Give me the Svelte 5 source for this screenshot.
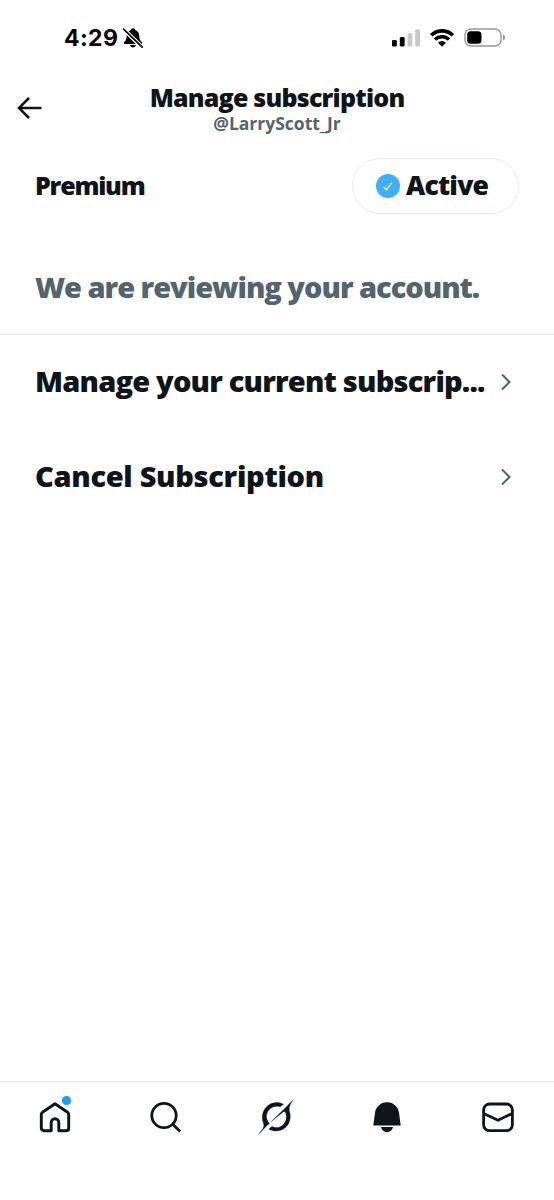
<script lang="ts">
	const username = 'LarryScott_Jr';

	const rows = [
		{ label: 'Manage your current subscrip...', kind: 'manage' },
		{ label: 'Cancel Subscription', kind: 'cancel' }
	];
</script>

<div class="screen">
	<div class="status-bar">
		<div class="clock">
			<span class="time">4:29</span>
			<svg width="22" height="22" viewBox="0 0 22 22" aria-hidden="true">
				<path
					d="M11 1.2c1.3 0 2 .8 2.2 1.8 2.8.9 4 3.2 4.1 5.8.1 3.5.7 4.7 2.5 6.3.8.8.4 1.8-.7 1.8H2.9c-1.1 0-1.5-1-.7-1.8C4 13.5 4.6 12.3 4.7 8.8 4.8 6.2 6 3.9 8.8 3 9 2 9.7 1.2 11 1.2zM8 18h6c-.3 1.6-1.4 2.5-3 2.5S8.3 19.6 8 18z"
					fill="#000"
				/>
				<path d="M1.6 2.2l18.6 18" stroke="#fff" stroke-width="4" />
				<path d="M1.6 2.2l18.6 18" stroke="#000" stroke-width="1.7" stroke-linecap="round" />
			</svg>
		</div>
		<div class="indicators">
			<svg width="28" height="18" viewBox="0 0 28 18" aria-hidden="true">
				<rect x="0" y="11" width="4.8" height="6.5" rx="1.3" />
				<rect x="7.8" y="8" width="4.8" height="9.5" rx="1.3" />
				<rect x="15.6" y="4.3" width="4.8" height="13.2" rx="1.3" fill="#c8c8c8" />
				<rect x="23.2" y="0.5" width="4.8" height="17" rx="1.3" fill="#c8c8c8" />
			</svg>
			<svg width="26" height="18" viewBox="0 0 26 18" aria-hidden="true">
				<path d="M2.2 6.3a15.3 15.3 0 0 1 21.6 0" fill="none" stroke="#000" stroke-width="3.7" />
				<path d="M6 10.6a9.9 9.9 0 0 1 14 0" fill="none" stroke="#000" stroke-width="3.5" />
				<path d="M9 13.8a5.6 5.6 0 0 1 8 0L13 17.8z" />
			</svg>
			<svg width="42" height="20" viewBox="0 0 42 20" aria-hidden="true">
				<rect x="1" y="1" width="36" height="17" rx="5.8" fill="none" stroke="#989898" stroke-width="1.4" />
				<rect x="3.2" y="3.2" width="14.3" height="12.6" rx="3.6" />
				<path d="M39 6.5c1.4.5 2.1 1.6 2.1 3s-.7 2.5-2.1 3z" fill="#989898" />
			</svg>
		</div>
	</div>

	<header class="header">
		<button type="button" class="back" aria-label="Back">
			<svg width="26" height="24" viewBox="0 0 26 24">
				<path d="M12 2L2 12l10 10M2 12H24.5" fill="none" stroke="#0f1419" stroke-width="2.5" />
			</svg>
		</button>
		<div class="heading">
			<h1>Manage subscription</h1>
			<span class="handle">@{username}</span>
		</div>
	</header>

	<main>
		<section class="plan">
			<h2>Premium</h2>
			<div class="status-pill">
				<svg width="24" height="24" viewBox="0 0 24 24" aria-hidden="true">
					<circle cx="12" cy="12" r="12" fill="#42aef5" />
					<path d="M7.5 12.8l2.8 3 5.5-7" fill="none" stroke="#fff" stroke-width="1.3" />
				</svg>
				<span>Active</span>
			</div>
		</section>

		<p class="notice">We are reviewing your account.</p>

		{#each rows as row (row.kind)}
			<button type="button" class="row">
				<span class="row-label {row.kind}">{row.label}</span>
				<svg width="12" height="18" viewBox="0 0 12 18" aria-hidden="true">
					<path d="M2 1.5L9.5 9 2 16.5" fill="none" stroke="#536471" stroke-width="2" />
				</svg>
			</button>
		{/each}
	</main>

	<nav class="tabs">
		<button type="button" class="tab" aria-label="Home">
			<svg width="36" height="36" viewBox="0 0 36 36">
				<path
					d="M5.5 13.2L18 4.8l12.5 8.4q1.2.8 1.2 2.3v13.4q0 2.9-2.9 2.9h-7V23.5a3.8 3.8 0 0 0-7.6 0v8.3h-7q-2.9 0-2.9-2.9V15.5q0-1.5 1.2-2.3z"
					fill="none"
					stroke="#0f1419"
					stroke-width="2.9"
					stroke-linejoin="round"
				/>
			</svg>
			<span class="dot"></span>
		</button>
		<button type="button" class="tab" aria-label="Search">
			<svg width="36" height="36" viewBox="0 0 36 36">
				<circle cx="16" cy="16.5" r="12.2" fill="none" stroke="#0f1419" stroke-width="2.8" />
				<path d="M24.8 25.3l7.3 7.2" stroke="#0f1419" stroke-width="2.8" />
			</svg>
		</button>
		<button type="button" class="tab" aria-label="Grok">
			<svg width="38" height="38" viewBox="0 0 38 38" fill="#0f1419" stroke="#0f1419" stroke-width="0.3">
				<path d="M14.2 23.6L28 10.2C32 6 34 4 36.3 1.7C33.6 5.6 31.8 8.2 32.3 12.4C34.7 20.3 32.5 26 28.2 29.7C23.4 33.8 16.6 34 11.8 30.9L14.9 28.4C18.6 30.2 22.6 29.7 25.5 27.2C29.2 23.9 30.2 19.5 28.6 14.7C28.2 13.3 27.2 13 26.2 13.9z" />
				<path d="M12.4 25.2C8.4 29 5.3 32.6 1.7 36.3C4.4 32.5 6.4 30.8 6.8 28C7.2 26.2 6 24.7 5.6 22.6C4.4 16.7 6.5 11.2 10.7 7.7C15.2 4 21.5 3.3 26.5 6.3L23.3 8.8C19.6 7.5 16 8.2 13.1 10.7C9 14.2 8 20.6 12.4 25.2z" />
			</svg>
		</button>
		<button type="button" class="tab" aria-label="Notifications">
			<svg width="36" height="36" viewBox="0 0 36 36" fill="#0f1419">
				<path d="M18 3.2c6.8 0 11.5 4.9 12.1 11.3L31.7 26.5H4.3l1.6-12C6.5 8.1 11.2 3.2 18 3.2z" />
				<path d="M12 28.1h12c-.7 3.2-3 5.1-6 5.1s-5.3-1.9-6-5.1z" />
			</svg>
		</button>
		<button type="button" class="tab" aria-label="Messages">
			<svg width="36" height="36" viewBox="0 0 36 36" fill="none" stroke="#0f1419" stroke-width="2.8">
				<rect x="3.6" y="5" width="28.8" height="26.7" rx="6" />
				<path d="M3.6 14.4l14.4 6.8 14.4-6.8" />
			</svg>
		</button>
	</nav>
</div>

<style>
	:global(body) {
		margin: 0;
		background: #fff;
	}

	.screen {
		box-sizing: border-box;
		width: 100%;
		height: 1200px;
		display: flex;
		flex-direction: column;
		background: #fff;
		color: #0f1419;
		font-family: 'Open Sans', 'Noto Sans', sans-serif;
		font-weight: 800;
		overflow: hidden;
	}

	button {
		border: 0;
		padding: 0;
		margin: 0;
		background: none;
		color: inherit;
		font: inherit;
		cursor: pointer;
	}

	svg {
		display: block;
		flex-shrink: 0;
	}

	h1,
	h2,
	p {
		margin: 0;
		font-weight: inherit;
		white-space: nowrap;
	}

	.status-bar {
		height: 75px;
		box-sizing: border-box;
		padding: 0 48px 0 64px;
		display: flex;
		align-items: center;
		justify-content: space-between;
		color: #000;
	}

	.clock {
		display: flex;
		align-items: center;
		gap: 4px;
	}

	.time {
		font-family: Inter, sans-serif;
		font-weight: 700;
		font-size: 23px;
		letter-spacing: 0.4px;
		line-height: 28px;
	}

	.indicators {
		display: flex;
		align-items: center;
		gap: 9px;
	}

	.header {
		height: 66px;
		display: grid;
		grid-template-columns: 60px 1fr 60px;
		align-items: center;
	}

	.back {
		padding-left: 17px;
	}

	.heading {
		display: flex;
		flex-direction: column;
		align-items: center;
		padding-top: 1px;
	}

	h1 {
		font-size: 25px;
		line-height: 28px;
		letter-spacing: -0.78px;
	}

	.handle {
		color: #536471;
		font-size: 17.5px;
		font-weight: 700;
		line-height: 24px;
	}

	.plan {
		height: 89px;
		box-sizing: border-box;
		padding: 0 35px;
		display: flex;
		align-items: center;
		justify-content: space-between;
	}

	h2 {
		font-size: 25px;
		letter-spacing: -1.2px;
		padding-bottom: 2px;
	}

	.status-pill {
		box-sizing: border-box;
		width: 167px;
		height: 56px;
		padding-left: 23px;
		border: 1px solid #e8edef;
		border-radius: 28px;
		display: flex;
		align-items: center;
		gap: 6px;
		font-size: 26.5px;
		letter-spacing: -0.8px;
	}

	.status-pill span {
		padding-bottom: 2px;
	}

	.notice {
		height: 105px;
		box-sizing: border-box;
		padding: 38px 35px 0;
		border-bottom: 1px solid #e4e8ea;
		color: #536471;
		font-size: 29px;
		line-height: 38px;
		letter-spacing: -1.02px;
	}

	.row {
		width: 100%;
		height: 94.5px;
		padding: 0 42px 0 35px;
		display: flex;
		align-items: center;
		justify-content: space-between;
		text-align: left;
	}

	.row-label {
		padding-bottom: 2px;
		font-size: 29px;
		line-height: 40px;
		white-space: nowrap;
		letter-spacing: -0.8px;
	}

	.row-label.cancel {
		letter-spacing: -0.3px;
	}

	.tabs {
		margin-top: auto;
		height: 119px;
		box-sizing: border-box;
		padding: 0 1px 48px 0;
		border-top: 1px solid #e4e8ea;
		display: grid;
		grid-template-columns: repeat(5, 1fr);
	}

	.tab {
		position: relative;
		display: flex;
		align-items: center;
		justify-content: center;
	}

	.dot {
		position: absolute;
		top: 14px;
		left: 62px;
		width: 9px;
		height: 9px;
		border-radius: 50%;
		background: #1d9bf0;
	}
</style>
